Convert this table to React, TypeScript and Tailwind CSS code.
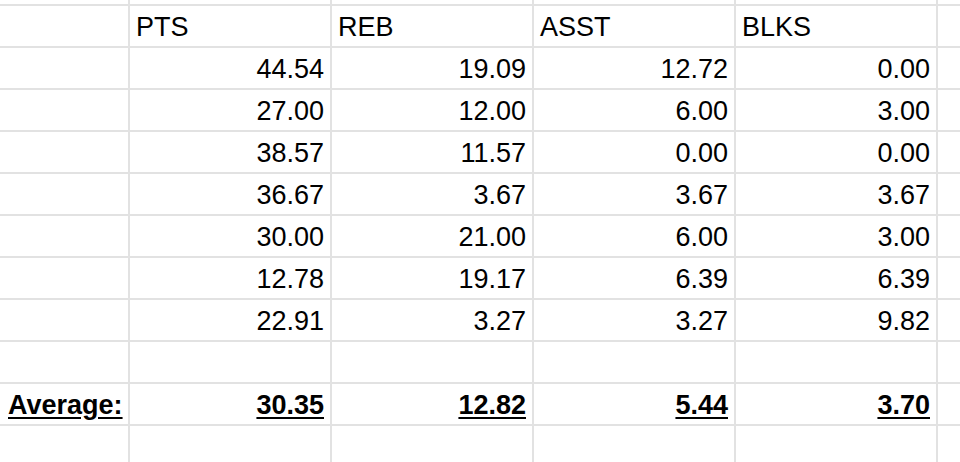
const headers = ['PTS', 'REB', 'ASST', 'BLKS'];

const rows: string[][] = [
  ['44.54', '19.09', '12.72', '0.00'],
  ['27.00', '12.00', '6.00', '3.00'],
  ['38.57', '11.57', '0.00', '0.00'],
  ['36.67', '3.67', '3.67', '3.67'],
  ['30.00', '21.00', '6.00', '3.00'],
  ['12.78', '19.17', '6.39', '6.39'],
  ['22.91', '3.27', '3.27', '9.82'],
];

const averages = ['30.35', '12.82', '5.44', '3.70'];

function Cell({
  children,
  align = 'left',
  bold = false,
  className = '',
}: {
  children?: React.ReactNode;
  align?: 'left' | 'right';
  bold?: boolean;
  className?: string;
}) {
  return (
    <div
      className={`bg-white flex items-center pt-[2px] whitespace-nowrap overflow-hidden ${
        align === 'right' ? 'justify-end pr-[6px]' : 'justify-start pl-[6px]'
      } ${bold ? 'font-bold underline underline-offset-[3px]' : ''} ${className}`}
    >
      {children}
    </div>
  );
}

function BlankRow() {
  return (
    <>
      {Array.from({length: 6}).map((_, i) => (
        <div key={i} className="bg-white" />
      ))}
    </>
  );
}

export default function App() {
  return (
    <div
      className="w-[960px] h-[462px] overflow-hidden bg-[#e2e2e2] grid gap-[2px] grid-cols-[128px_200px_200px_200px_200px_1fr] grid-rows-[4px_repeat(10,40px)_1fr] text-[27px] text-black"
      style={{fontFamily: '"Liberation Sans", Arial, sans-serif'}}
    >
      {/* top sliver of the row above */}
      <BlankRow />

      {/* header */}
      <Cell />
      {headers.map((h) => (
        <Cell key={h}>{h}</Cell>
      ))}
      <Cell />

      {rows.map((r, i) => (
        <div key={i} className="contents">
          <Cell />
          {r.map((v, j) => (
            <Cell key={j} align="right">
              {v}
            </Cell>
          ))}
          <Cell />
        </div>
      ))}

      {/* empty row */}
      <BlankRow />

      {/* averages */}
      <Cell bold className="!pl-[8px]">
        Average:
      </Cell>
      {averages.map((v, j) => (
        <Cell key={j} align="right" bold>
          {v}
        </Cell>
      ))}
      <Cell />

      {/* partial bottom row */}
      <BlankRow />
    </div>
  );
}
